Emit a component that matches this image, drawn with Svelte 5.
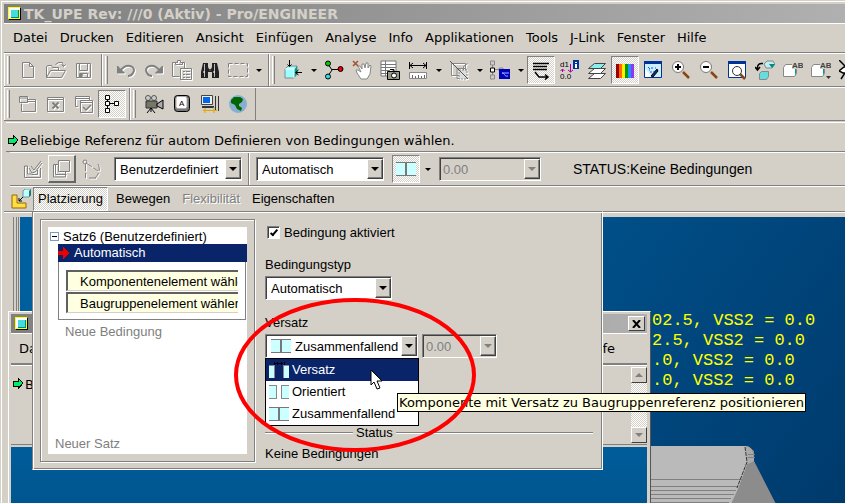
<script lang="ts">
  type Tool = { icon: string; label: string; off?: boolean; pressed?: boolean; menu?: boolean };

  const menus = ['Datei', 'Drucken', 'Editieren', 'Ansicht', 'Einfügen', 'Analyse', 'Info', 'Applikationen', 'Tools', 'J-Link', 'Fenster', 'Hilfe'];

  const mainBar: Tool[][] = [
    [
      { icon: 'new', label: 'Neu', off: true },
      { icon: 'open', label: 'Öffnen', off: true },
      { icon: 'save', label: 'Speichern', off: true }
    ],
    [
      { icon: 'undo', label: 'Rückgängig', off: true },
      { icon: 'redo', label: 'Wiederholen', off: true },
      { icon: 'paste', label: 'Einfügen', off: true },
      { icon: 'find', label: 'Suchen' },
      { icon: 'marquee', label: 'Auswahl', off: true, menu: true }
    ],
    [
      { icon: 'place', label: 'Komponente', menu: true },
      { icon: 'nodes', label: 'Verbindung' },
      { icon: 'hand', label: 'Ziehen' },
      { icon: 'snapshot', label: 'Schnappschuss' },
      { icon: 'measure', label: 'Messen', menu: true },
      { icon: 'section', label: 'Schnitt', off: true, menu: true },
      { icon: 'structure', label: 'Struktur', menu: true },
      { icon: 'textflow', label: 'Notizen', pressed: true },
      { icon: 'dims', label: 'Bemaßung' },
      { icon: 'layers', label: 'Folien' },
      { icon: 'colors', label: 'Farben', pressed: true },
      { icon: 'repaint', label: 'Bildaufbau' },
      { icon: 'zoomin', label: 'Vergrößern' },
      { icon: 'zoomout', label: 'Verkleinern' },
      { icon: 'zoomfit', label: 'Einpassen' },
      { icon: 'orient', label: 'Orientieren' },
      { icon: 'views', label: 'Ansichten' },
      { icon: 'viewsmenu', label: 'Ansichtsliste' },
      { icon: 'spin', label: 'Drehzentrum' }
    ]
  ];

  const secondBar: Tool[][] = [
    [
      { icon: 'newwin', label: 'Neues Fenster', off: true },
      { icon: 'closewin', label: 'Fenster schließen', off: true },
      { icon: 'checkwin', label: 'Fenster aktivieren', off: true },
      { icon: 'tree', label: 'Modellbaum', pressed: true }
    ],
    [
      { icon: 'camera', label: 'Kamera' },
      { icon: 'key', label: 'Tastenkürzel' },
      { icon: 'computer', label: 'Arbeitsplatz' },
      { icon: 'globe', label: 'Browser' }
    ]
  ];

  const tabs = [
    { name: 'Platzierung', active: true },
    { name: 'Bewegen' },
    { name: 'Flexibilität', off: true },
    { name: 'Eigenschaften' }
  ];

  const offsets = [
    { name: 'Versatz', icon: 'gapwide' },
    { name: 'Orientiert', icon: 'gap' },
    { name: 'Zusammenfallend', icon: 'mate' }
  ];

  const notes = ['02.5, VSS2 = 0.0', '2.5, VSS2 = 0.0', '.0, VSS2 = 0.0', '.0, VSS2 = 0.0'];

  let enabled = $state(true);
  let hovered = $state('Versatz');
</script>

{#snippet appIcon()}
  <svg class="px" width="14" height="14" viewBox="0 0 14 14" aria-hidden="true">
    <path d="M1 1h12v12H1z" fill="#000" />
    <path d="M0 0h12v12H0z" fill="#ff0" />
    <path d="M1 1h11v2H1zM1 1h2v10H1z" fill="#fff" />
    <path d="M0 .5h12M.5 0v12M0 11.500h12" stroke="#ff0" stroke-dasharray="1 1" />
    <path d="M3 3h8v8H3z" fill="#088" />
    <path d="M3 3h7v7H3z" fill="#4dd" />
  </svg>
{/snippet}

{#snippet goArrow()}
  <svg class="px" width="12" height="13" viewBox="0 0 12 13" aria-hidden="true">
    <path d="M1 4h5V1l5 5-5 6V9H1z" fill="#0e6" stroke="#000" />
  </svg>
{/snippet}

{#snippet plates(kind: string)}
  <svg class="px" width="22" height="16" viewBox="0 0 22 16" aria-hidden="true">
    {#if kind === 'mate'}
      <path d="M1 2h20v12H1z" fill="#cff" />
      <path d="M1 1h20v1H1zM1 14h20v1H1zM10 1h2v14h-2z" fill="#777" />
    {:else if kind === 'gap'}
      <path d="M1 2h8v12H1zM13 2h8v12h-8z" fill="#cff" />
      <path d="M1 1h8v1H1zM1 14h8v1H1zM8 1h1v14H8zM13 1h8v1h-8zM13 14h8v1h-8zM13 1h1v14h-1z" fill="#888" />
    {:else}
      <path d="M1 4h6v12H1zM15 4h6v12h-6z" fill="#cff" />
      <path d="M1 3h6v1H1zM6 3h1v13H6zM15 3h6v1h-6zM15 3h1v13h-1z" fill="#888" />
      <path d="M6 0v3M16 0v3M7 1h8M9 0v3M13 0v3" stroke="#000" />
    {/if}
  </svg>
{/snippet}

{#snippet icon(name: string)}
  <svg width="20" height="20" viewBox="0 0 20 20" fill="none" stroke="#000" aria-hidden="true">
    {#if name === 'new'}
      <path d="M4.500 2.500h7l4 4v11h-11zM11.500 2.500v4h4" />
    {:else if name === 'open'}
      <path d="M.5 17.500v-11l1-1h4l1 2h6v3M.5 17.500l4-7h15l-4 7zM9.500 4.500l3-2h4l1 4M15.500 4.500l2 2 2-2" />
    {:else if name === 'save'}
      <path d="M2.500 3.500h14v14h-14zM5.500 3.500v7h8v-7M5.500 17.500v-4h8v4M7.500 15h2" />
      <path d="M6 14h2v3H6z" fill="#808080" />
    {:else if name === 'undo'}
      <path d="M4 11c3-4 6-6 10-5 4 1 5 4 3 7-1 2-3 3-5 3" stroke-width="2" />
      <path d="M1.500 6v7h7z" fill="#808080" />
    {:else if name === 'redo'}
      <path d="M16 11c-3-4-6-6-10-5-4 1-5 4-3 7 1 2 3 3 5 3" stroke-width="2" />
      <path d="M18.500 6v7h-7z" fill="#808080" />
    {:else if name === 'paste'}
      <path d="M5.500 2.500h-5v14h7M12.500 8v-5.500h-3M3.500 4.500h7v-2h-2v-2h-3v2h-2zM8.500 8.500h11v11h-11zM11 11.500h2M14 11.500h4M11 14.500h2M14 14.500h4M11 17.500h2M14 17.500h4" />
    {:else if name === 'find'}
      <path d="M3 3h5v4l1 2h2l1-2V3h5l2 9v6h-7v-6H8v6H1v-6z" fill="#222" stroke="none" />
      <path d="M4.500 4v13M14.500 4v13M9.500 10h1" stroke="#bbb" />
      <path d="M3 12h2M13 12h2" stroke="#fff" />
    {:else if name === 'marquee'}
      <path d="M.5 3.500h19v13H.5z" stroke-dasharray="4 2" />
    {:else if name === 'place'}
      <path d="M2 9l3-3h9v8l-3 4H2z" fill="#9ff" stroke="#888" />
      <path d="M11 10l3-4v8l-3 4z" fill="#099" stroke="none" />
      <path d="M2 9h9v9" stroke="#fff" />
      <path d="M6.500 0v6M4.500 4.500l2 2 2-2M19 12.500h-6M15.500 10l-3 2.500 3 2.500" />
    {:else if name === 'nodes'}
      <path d="M4 4l4 6-4 6M8 9.500h9" />
      <circle cx="4" cy="3.500" r="2.500" fill="#0c0" />
      <circle cx="16.500" cy="9" r="2.500" fill="#e00" />
      <circle cx="4" cy="16.500" r="2.500" fill="#3dd" />
    {:else if name === 'hand'}
      <path d="M1 1l5 5M6 1L1 6" stroke="#a0522d" stroke-width="1.500" />
      <path d="M9 19l-4-6-1-3h2l3 2-3-6h2l2 3V4h2l1 4 1-5h2l0 5 2-3 1 1-1 8-3 5z" fill="#fff" stroke="#888" />
    {:else if name === 'snapshot'}
      <path d="M1 1h15v15H1z" fill="#fff" stroke="#777" />
      <path d="M1 4.500h15M1 7.500h15M1 10.500h9M1 13.500h8M5.500 1v15" stroke="#777" />
      <path d="M7.500 11.500h12v8h-12zM10 9.500h4v2" fill="#998" />
      <circle cx="14" cy="15.500" r="2.500" fill="#fff" />
    {:else if name === 'measure'}
      <path d="M1.500 2v7M18.500 2v7M2 5.500h16M5 3L2 5.500 5 8M15 3l3 2.500L15 8" />
      <path d="M1.500 12.500h17v6h-17z" fill="#fff" stroke="#888" />
      <path d="M4.500 15v3M7.500 16v2M10.500 15v3M13.500 16v2M16.500 15v3" stroke="#666" />
    {:else if name === 'section'}
      <path d="M2.500 3.500h14v10M2.500 3.500v12h5M7.500 15.500h7v-9l4-3M8 8.500h9v10H8z" stroke="#888" />
      <path d="M10 10h8v9h-8z" fill="#ddd" stroke="#888" stroke-dasharray="2 1" />
      <path d="M1 1l18 18" stroke="#555" />
    {:else if name === 'structure'}
      <path d="M2.500 4v12M5 9.500h7" stroke="#888" />
      <path d="M.5 1h4v4h-4zM.5 15h4v4h-4zM9 8h4v3H9z" fill="#ccc" stroke="#888" />
      <path d="M.5 8h4v4h-4z" fill="#fff" />
      <path d="M9 9h11v10H9z" fill="#00b" stroke="none" />
      <path d="M12 13h7M12 13c3 0 2 4 6 3" stroke="#9bf" />
    {:else if name === 'textflow'}
      <path d="M2 3.500h16M2 6.500h14M2 9.500h14M4 12l4 5h9M14 14.500l3 2.500-3 2.500" stroke-width="1.500" />
    {:else if name === 'dims'}
      <text x="1" y="7" class="tiny">d1</text>
      <text x="1" y="19" class="tiny">0.0</text>
      <path d="M3.500 12V9M1.500 11l2-2 2 2M11.500 4v8M9 10l2.500 2 2.500-2" stroke="#a0a" />
      <path d="M14 0h6v9h-6z" fill="#039" stroke="none" />
      <path d="M17 2v1M17 4v4" stroke="#fff" stroke-width="2" />
    {:else if name === 'layers'}
      <path d="M1.500 18.500l6-5h11l-5 5z" fill="#fff" stroke="#444" />
      <path d="M1.500 13.500l6-5h11l-5 5z" fill="#fff" stroke="#444" />
      <path d="M1.500 8.500l6-5h11l-5 5z" fill="#8ee" stroke="#444" />
    {:else if name === 'colors'}
      <g stroke="none">
        <path d="M1 4h3v14H1z" fill="#900" />
        <path d="M4 4h3v14H4z" fill="#f60" />
        <path d="M7 4h3v14H7z" fill="#fe0" />
        <path d="M10 4h3v14h-3z" fill="#090" />
        <path d="M13 4h3v14h-3z" fill="#19f" />
        <path d="M16 4h3v14h-3z" fill="#93e" />
      </g>
    {:else if name === 'repaint'}
      <path d="M1.500 1.500h17v16h-17z" fill="#fff" stroke="#039" />
      <path d="M1 1h18v3H1z" fill="#039" stroke="none" />
      <path d="M2 4h16v13h-8l-8-8z" fill="#cef" stroke="none" />
      <path d="M5 7l2 2M9 7v2M7 12h2M11 11v1M6 10h1M12 8h1" stroke="#06f" />
      <path d="M14 9l1 2-5 6-2-1z" fill="#137" />
    {:else if name === 'zoomin' || name === 'zoomout'}
      <path d="M12 12l6 6" stroke="#8b4513" stroke-width="2.500" />
      <circle cx="7" cy="7" r="5.500" fill="#fff" stroke="#777" />
      <path d="M4 7h6" stroke-width="2" />
      {#if name === 'zoomin'}
        <path d="M7 4v6" stroke-width="2" />
      {/if}
    {:else if name === 'zoomfit'}
      <path d="M1.500 1.500h17v16h-17z" fill="#fff" stroke="#039" />
      <path d="M1 1h18v3H1z" fill="#039" stroke="none" />
      <path d="M13 14l5 5" stroke="#8b4513" stroke-width="2.500" />
      <circle cx="10" cy="11" r="4.500" fill="#fff" stroke="#333" />
    {:else if name === 'orient'}
      <path d="M8 3.500C4 3 2 5 2.500 9M0 7l2.500 3L5 7" stroke-width="1.500" />
      <path d="M4.500 13.500l2-2h7v5l-2 3h-7z" fill="#6dd" stroke="#888" />
      <path d="M9 4l3-3h6l2 3-3 4h-6z" fill="#bee" stroke="#888" />
      <path d="M14 4l6 0-3 4z" fill="#088" stroke="none" />
    {:else if name === 'views' || name === 'viewsmenu'}
      <path d="M.5 7.500l2-3h11v9l-2 3H.5z" fill="#fff" stroke="#888" />
      <path d="M12 8l1-3v8l-1 3z" fill="#099" stroke="none" />
      <path d="M9 0h11v9H9z" fill="#d4d0c8" stroke="none" />
      <text x="9" y="8" class="tiny dark">AB</text>
      {#if name === 'viewsmenu'}
        <path d="M15 16h5l-2.500 3z" fill="#333" stroke="none" />
      {/if}
    {:else if name === 'spin'}
      <path d="M0 0l6 6M2 19l4-6M0 11l5-4h4v6H4z" fill="#fff" stroke-width="1.500" />
    {:else if name === 'newwin'}
      <path d="M10 5.500h7.500v12h-14v-8" />
      <path d="M1.500 2.500h8v6h-8zM1 4h9M10 7.500h7" />
    {:else if name === 'closewin'}
      <path d="M1.500 3.500h16v14h-16zM2 5.500h15" />
      <path d="M6.500 8.500l6 6M12.500 8.500l-6 6" stroke-width="2" />
    {:else if name === 'checkwin'}
      <path d="M4 12.500H1.500v-10h14V6M2 4.500h13M6.500 6.500h12v12h-12zM7 8.500h11" />
      <path d="M9 13l3 3 5-5" stroke-width="1.500" />
    {:else if name === 'tree'}
      <path d="M5.500 5v10M8 9.500h8" />
      <path d="M3.500 1.500h4v4h-4zM3.500 7.500h4v4h-4zM3.500 14.500h4v4h-4zM12.500 7.500h4v4h-4z" fill="#fff" />
    {:else if name === 'camera'}
      <circle cx="4" cy="4" r="2.500" fill="#ccc" stroke="#555" />
      <circle cx="10" cy="4" r="2.500" fill="#ccc" stroke="#555" />
      <path d="M2 7h11v7H2z" fill="#776" stroke="#333" />
      <path d="M13 10l6-4v9l-6-3z" fill="#aaa" />
      <path d="M7 14l-4 5M7 14l4 5M7 14v4" />
    {:else if name === 'key'}
      <rect x="2.500" y="1.500" width="15" height="16" rx="3" fill="#777" />
      <rect x="4" y="2.500" width="11" height="12" rx="2" fill="#fff" stroke="#aaa" />
      <text x="7" y="12" class="tiny">A</text>
    {:else if name === 'computer'}
      <path d="M1.500 1.500h11v9h-11z" fill="#eee" stroke="#444" />
      <path d="M3 3h7v6H3z" fill="#06e" stroke="none" />
      <path d="M2 13h12" stroke="#333" stroke-width="2" />
      <path d="M15.500 2v15M18.500 2v15" stroke="#333" />
      <path d="M3 16.500h14M5 19v-5M14 13v6" stroke="#da0" />
    {:else if name === 'globe'}
      <circle cx="10" cy="10" r="9" fill="#88aed0" stroke="none" />
      <path d="M3 6l3-3 6 0 3 2-1 3-3 2 0 2 3 2-1 3-4-2-2-4-4-2z" fill="#060" stroke="none" />
    {:else if name === 'edit'}
      <path d="M1.500 7v11.500h16V9M4.500 7v8h4M1.500 7h3M8.500 15.500h6V11" />
      <path d="M6 9l3 5 3-1 7-9M8 7l3 4 7-9" />
    {:else if name === 'copy'}
      <path d="M6.500 1.500h11v11h-11zM3.500 5.500v10h11M1.500 5.500v12.500h12v-5M1.500 5.500h5" />
    {:else if name === 'angle'}
      <path d="M4.500 5v14M5 4l12 8M17 5c2 4 2 9-3 14M15 19h-8" stroke-dasharray="7 2" />
      <circle cx="4" cy="3" r="2" />
    {/if}
  </svg>
{/snippet}

{#snippet toolbar(groups: Tool[][])}
  <div class="toolbar" role="toolbar">
    {#each groups as group}
      <div class="group">
        {#each group as tool}
          <button class="tool" class:off={tool.off} class:pressed={tool.pressed} aria-label={tool.label}>
            {@render icon(tool.icon)}
          </button>
          {#if tool.menu}
            <button class="more" aria-label={tool.label + ' Liste'}><i class="tri"></i></button>
          {/if}
        {/each}
      </div>
    {/each}
  </div>
{/snippet}

<div class="app">
  <header class="title">
    {@render appIcon()}
    <span>TK_UPE Rev: ///0 (Aktiv) - Pro/ENGINEER</span>
  </header>

  <nav class="menu">
    {#each menus as item}
      <button>{item}</button>
    {/each}
  </nav>

  {@render toolbar(mainBar)}
  {@render toolbar(secondBar)}

  <div class="message">
    {@render goArrow()}
    <span>Beliebige Referenz für autom Definieren von Bedingungen wählen.</span>
  </div>

  <div class="dashboard">
    <div class="tools">
      <button class="tool off" aria-label="Bearbeiten">{@render icon('edit')}</button>
      <button class="tool off raised" aria-label="Kopieren">{@render icon('copy')}</button>
      <button class="tool off" aria-label="Winkel">{@render icon('angle')}</button>
    </div>
    <div class="combo set">
      <select aria-label="Satztyp"><option>Benutzerdefiniert</option></select>
      <i class="drop"></i>
    </div>
    <div class="divider"></div>
    <div class="combo kind">
      <select aria-label="Bedingung"><option>Automatisch</option></select>
      <i class="drop"></i>
    </div>
    <div class="tools">
      <button class="tool pressed" aria-label="Zusammenfallend">{@render plates('mate')}</button>
      <button class="more" aria-label="Versatz Liste"><i class="tri"></i></button>
    </div>
    <div class="combo value">
      <select disabled aria-label="Wert"><option>0.00</option></select>
      <i class="drop"></i>
    </div>
    <span class="state">STATUS:Keine Bedingungen</span>
  </div>

  <div class="tabs">
    <svg class="partmark" width="20" height="20" viewBox="0 0 20 20" aria-hidden="true">
      <path d="M1 6h5v8h9v5H1z" fill="#fd4" stroke="#960" />
      <path d="M12 2l2-2h6v6l-2 2h-6z" fill="#bff" stroke="#699" />
      <path d="M18 2l2-2v6l-2 2z" fill="#277" />
      <path d="M12 8l-4 4M8 9v3h3" fill="none" stroke="#000" />
    </svg>
    {#each tabs as tab}
      <button class="tab" class:active={tab.active} disabled={tab.off}>{tab.name}</button>
    {/each}
  </div>

  <main class="workspace">
    <div class="viewport"></div>

    <div class="notes">
      {#each notes as note}
        <div>{note}</div>
      {/each}
    </div>

    <svg class="model" width="130" height="60" viewBox="0 0 130 60" aria-hidden="true">
      <path d="M0 0h97l6 5v10l23 45H0z" fill="#8c8c8c" />
      <path d="M0 0h95l2 16-10 27-8 17H0z" fill="#bababa" />
      <path d="M95 1c5-1 8 4 8 14l-6 3z" fill="#aaa" />
      <path d="M0 33.500h91M0 40.500h87M0 44.500h85M0 48.500h83M0 52.500h80M0 56.500h78M97 8.500h7M97 11.500h7" stroke="#808080" />
      <path d="M94 1l2 15-10 26" fill="none" stroke="#333" stroke-dasharray="4 1" />
    </svg>

    <section class="child">
      <header class="title">
        {@render appIcon()}
        <span>I</span>
        <button class="close" aria-label="Schließen">
          <svg width="9" height="8" viewBox="0 0 9 8"><path d="M1 0l7 8M8 0L1 8" stroke="#000" stroke-width="2" /></svg>
        </button>
      </header>
      <div class="childmenu">
        <button>Datei</button>
        <button>Hilfe</button>
      </div>
      <div class="childbody">
        <div class="childmsg">{@render goArrow()}<span>B</span></div>
        <div class="scroll">
          <button aria-label="Nach oben"><i class="tri up"></i></button>
          <button aria-label="Nach unten"><i class="tri"></i></button>
        </div>
      </div>
      <div class="childview"></div>
    </section>

    <section class="panel">
      <div class="sets">
        <div class="tree">
          <div class="node"><i class="minus"></i>Satz6 (Benutzerdefiniert)</div>
          <div class="branch">
            <div class="current">
              <svg class="px" width="12" height="12" viewBox="0 0 12 12" aria-hidden="true">
                <path d="M0 4h5V0l6 6-6 6V8H0z" fill="#e00" />
              </svg>
              Automatisch
            </div>
            <div class="refs">
              <input readonly aria-label="Komponentenreferenz" value="Komponentenelement wählen" />
              <input readonly aria-label="Baugruppenreferenz" value="Baugruppenelement wählen" />
            </div>
            <button class="add">Neue Bedingung</button>
          </div>
          <button class="add last">Neuer Satz</button>
        </div>
      </div>

      <div class="form">
        <label class="check">
          <input type="checkbox" bind:checked={enabled} />
          Bedingung aktiviert
        </label>
        <label class="caption" for="ctype">Bedingungstyp</label>
        <div class="combo type">
          <select id="ctype"><option>Automatisch</option></select>
          <i class="drop"></i>
        </div>
        <label class="caption" for="coffset">Versatz</label>
        <div class="pair">
          <div class="combo offset">
            <select id="coffset"><option>Zusammenfallend</option></select>
            <span class="mark">{@render plates('mate')}</span>
            <i class="drop"></i>
          </div>
          <div class="combo amount">
            <select disabled aria-label="Versatzwert"><option>0.00</option></select>
            <i class="drop"></i>
          </div>
          <div class="list" role="listbox" aria-label="Versatz">
            {#each offsets as item}
              <button
                role="option"
                aria-selected={hovered === item.name}
                class:hot={hovered === item.name}
                onmouseenter={() => (hovered = item.name)}
              >
                {@render plates(item.icon)}{item.name}
              </button>
            {/each}
          </div>
        </div>
        <div class="rule"><span>Status</span></div>
        <p>Keine Bedingungen</p>
      </div>
    </section>

    <div class="tip" role="tooltip">Komponente mit Versatz zu Baugruppenreferenz positionieren</div>

    <svg class="ring" width="244" height="156" viewBox="0 0 244 156" aria-hidden="true">
      <ellipse cx="122" cy="78" rx="119" ry="75" fill="none" stroke="#f00" stroke-width="4" />
    </svg>
    <svg class="cursor" width="13" height="21" viewBox="0 0 13 21" aria-hidden="true">
      <path d="M1 1v15l3-3 3 7 3-1-3-7h5z" fill="#fff" stroke="#000" />
    </svg>
  </main>
</div>

<style>
  :global(body) {
    background: #d4d0c8;
    overflow: hidden;
  }

  .app {
    --face: #d4d0c8;
    --dark: #808080;
    --navy: #0a246a;
    --checker: repeating-conic-gradient(#fff 0 25%, #d4d0c8 0 50%) 0 0 / 2px 2px;
    box-sizing: border-box;
    display: flex;
    flex-direction: column;
    height: 100vh;
    padding: 4px 0 0 4px;
    overflow: hidden;
    background: var(--face);
    box-shadow: inset 1px 1px #d4d0c8, inset 2px 2px #fff;
    font: 13px/16px 'Liberation Sans', Arial, sans-serif;
    color: #000;
  }

  .app *,
  .app *::before {
    box-sizing: border-box;
  }

  svg {
    display: block;
    flex: none;
  }

  .px {
    shape-rendering: crispEdges;
  }

  button {
    padding: 0;
    border: 0;
    background: none;
    color: inherit;
    font: inherit;
    white-space: nowrap;
  }

  .tiny {
    font: 8px 'Liberation Sans', sans-serif;
    fill: #000;
    stroke: none;
  }

  .tiny.dark {
    font-weight: bold;
    fill: #444;
  }

  .title {
    flex: none;
    display: flex;
    align-items: center;
    gap: 2px;
    height: 19px;
    padding-left: 4px;
    background: linear-gradient(90deg, #808080, #b0b0b0);
    color: #d4d0c8;
    font: bold 14px/18px 'DejaVu Sans', Verdana, sans-serif;
    white-space: nowrap;
  }

  .menu {
    flex: none;
    display: flex;
    gap: 12px;
    height: 30px;
    padding-left: 9px;
    border-top: 1px solid #fff;
    border-bottom: 1px solid var(--dark);
    font: 13px/28px 'DejaVu Sans', Verdana, sans-serif;
  }

  .toolbar {
    flex: none;
    display: flex;
    height: 34px;
    border-top: 1px solid #fff;
    border-bottom: 1px solid var(--dark);
  }

  .group {
    flex: none;
    display: flex;
    align-items: center;
    padding: 0 3px 0 2px;
    border-right: 1px solid var(--dark);
    border-left: 1px solid #fff;
  }

  .group::before {
    content: '';
    width: 3px;
    height: 28px;
    margin-right: 4px;
    border-left: 1px solid #fff;
    border-right: 1px solid var(--dark);
  }

  .tool {
    flex: none;
    display: grid;
    place-items: center;
    width: 28px;
    height: 28px;
    border: 1px solid transparent;
  }

  .tool.off svg {
    stroke: #808080;
    filter: drop-shadow(1px 1px 0 #fff);
  }

  .tool.pressed {
    border-color: var(--dark) #fff #fff var(--dark);
    background: var(--checker);
  }

  .tool.raised {
    border: 1px solid #fff;
    border-right: 2px solid #666;
    border-bottom: 2px solid #666;
  }

  .more {
    display: grid;
    place-items: center;
    width: 13px;
    height: 28px;
  }

  .tri {
    border: 3px solid transparent;
    border-top-color: #000;
    border-bottom: 0;
  }

  .message {
    flex: none;
    display: flex;
    align-items: center;
    gap: 1px;
    height: 30px;
    margin: 1px 0 0 2px;
    padding: 7px 0 0 1px;
    border-top: 1px solid #fff;
    border-bottom: 1px solid var(--dark);
    font: 13px/16px 'DejaVu Sans', Verdana, sans-serif;
    white-space: nowrap;
  }

  .dashboard {
    flex: none;
    display: flex;
    align-items: center;
    height: 34px;
    margin-left: 6px;
    padding-left: 9px;
    border-top: 1px solid #fff;
    border-bottom: 1px solid var(--dark);
    white-space: nowrap;
  }

  .state {
    font-size: 14px;
  }

  .tools {
    display: flex;
  }

  .tools .tool {
    margin-right: 1px;
  }

  .divider {
    width: 2px;
    height: 32px;
    margin: 0 6px;
    border-left: 1px solid var(--dark);
    border-right: 1px solid #fff;
  }

  .combo {
    flex: none;
    display: grid;
    align-items: center;
    height: 24px;
    border: 1px solid;
    border-color: var(--dark) #fff #fff var(--dark);
  }

  .combo > * {
    grid-area: 1 / 1;
  }

  .combo select {
    appearance: none;
    width: 100%;
    height: 22px;
    margin: 0;
    padding: 0 16px 0 4px;
    border: 1px solid #404040;
    border-right: 0;
    border-bottom: 0;
    border-radius: 0;
    background: #fff;
    color: #000;
    font: inherit;
  }

  .combo select:disabled {
    background: var(--face);
    color: var(--dark);
    opacity: 1;
  }

  .drop {
    justify-self: end;
    display: grid;
    place-items: center;
    width: 16px;
    height: 20px;
    border: 1px solid;
    border-color: #fff #404040 #404040 #fff;
    box-shadow: inset -1px -1px var(--dark);
    background: var(--face);
    pointer-events: none;
  }

  .drop::before {
    content: '';
    border: 4px solid transparent;
    border-top-color: #000;
    border-bottom: 0;
  }

  select:disabled ~ .drop::before {
    border-top-color: var(--dark);
  }

  .set {
    width: 128px;
    margin-left: 8px;
  }

  .kind {
    width: 128px;
    margin-right: 8px;
  }

  .value {
    width: 102px;
    margin: 0 32px 0 5px;
  }

  .value select,
  .amount select {
    padding-left: 2px;
  }

  .tabs {
    flex: none;
    display: flex;
    gap: 4px;
    height: 25px;
    margin-left: 6px;
    border-top: 1px solid #fff;
  }

  .partmark {
    margin: 2px -2px 0 1px;
  }

  .tab {
    height: 24px;
    padding: 0 4px;
  }

  .tab.active {
    border: 1px solid;
    border-color: var(--dark) #fff #fff var(--dark);
    background: var(--checker);
  }

  .tab:disabled {
    color: var(--dark);
    text-shadow: 1px 1px #fff;
  }

  .workspace {
    position: relative;
    flex: 1;
    display: flex;
    padding-top: 5px;
    padding-left: 9px;
    border-top: 1px solid var(--dark);
    box-shadow: inset 0 1px #fff;
  }

  .workspace::before {
    content: '';
    width: 6px;
    margin-right: 1px;
    border-left: 1px solid var(--dark);
    border-right: 3px double var(--dark);
  }

  .viewport {
    flex: 1;
    background: linear-gradient(125deg, #00609f 0%, #005590 45%, #003a6c 100%);
  }

  .notes {
    position: absolute;
    left: 648px;
    top: 99px;
    color: #ff0;
    font: 17px/20px 'Liberation Mono', monospace;
    white-space: pre;
  }

  .model {
    position: absolute;
    left: 647px;
    top: 234px;
  }

  .child {
    position: absolute;
    left: 4px;
    top: 99px;
    bottom: 0;
    display: flex;
    flex-direction: column;
    width: 643px;
    padding: 2px 3px 0 2px;
    border-top: 1px solid #fff;
    border-left: 1px solid #fff;
    border-right: 1px solid #555;
    background: var(--face);
  }

  .child .title {
    padding: 0 2px 0 4px;
  }

  .close {
    display: grid;
    place-items: center;
    width: 17px;
    height: 15px;
    margin-left: auto;
    border: 1px solid;
    border-color: #fff #404040 #404040 #fff;
    background: var(--face);
  }

  .childmenu {
    display: flex;
    justify-content: space-between;
    height: 32px;
    padding: 0 32px 0 8px;
    border-top: 1px solid #fff;
    border-bottom: 2px solid var(--dark);
    font: 13px/28px 'DejaVu Sans', Verdana, sans-serif;
  }

  .childbody {
    display: flex;
    justify-content: space-between;
    height: 80px;
    border-top: 1px solid #fff;
    border-bottom: 1px solid var(--dark);
    font: 13px/16px 'DejaVu Sans', Verdana, sans-serif;
  }

  .childmsg {
    display: flex;
    gap: 1px;
    padding: 11px 0 0 1px;
  }

  .scroll {
    display: flex;
    flex-direction: column;
    justify-content: space-between;
    width: 16px;
    margin: 1px 0;
    background: var(--checker);
  }

  .scroll button {
    display: grid;
    place-items: center;
    height: 16px;
    border: 1px solid;
    border-color: #fff #404040 #404040 #fff;
    background: var(--face);
  }

  .scroll .tri {
    border-width: 4px;
    border-top-color: var(--dark);
    border-bottom-width: 0;
  }

  .scroll .tri.up {
    border-top-width: 0;
    border-bottom: 4px solid var(--dark);
  }

  .childview {
    flex: 1;
    margin-top: 2px;
    background: linear-gradient(#005c9a, #00568f);
  }

  .panel {
    position: absolute;
    left: 28px;
    top: -1px;
    display: flex;
    gap: 9px;
    width: 571px;
    height: 259px;
    padding: 7px 9px 7px 7px;
    border: 1px solid var(--dark);
    border-right-color: #fff;
    border-bottom-color: #fff;
    box-shadow: inset 1px 1px #fff, inset -1px -1px var(--dark);
    background: var(--face);
  }

  .sets {
    flex: none;
    display: flex;
    width: 215px;
    padding: 7px;
    border: 1px solid var(--dark);
    box-shadow: inset 1px 1px #fff, 1px 1px #fff;
  }

  .tree {
    flex: 1;
    display: flex;
    flex-direction: column;
    min-width: 0;
    background: #fff;
  }

  .node {
    display: flex;
    align-items: center;
    gap: 4px;
    height: 17px;
    padding: 2px 0 0 2px;
    white-space: nowrap;
  }

  .minus {
    display: grid;
    place-items: center;
    width: 9px;
    height: 9px;
    border: 1px solid #7b9ebd;
    background: #fff;
  }

  .minus::before {
    content: '';
    width: 5px;
    height: 1px;
    background: #000;
  }

  .branch {
    margin-left: 10px;
  }

  .current {
    display: flex;
    align-items: center;
    gap: 4px;
    height: 18px;
    background: var(--navy);
    color: #fff;
  }

  .refs {
    height: 58px;
    margin-right: 1px;
    padding: 8px 7px;
    border: 1px solid var(--dark);
    border-top: 0;
  }

  .refs input {
    display: block;
    width: 100%;
    height: 21px;
    margin: 0 0 1px;
    padding: 1px 0 0 12px;
    border: 1px solid #d4d0c8;
    border-top: 2px solid #606060;
    border-left: 2px solid #606060;
    border-right: 0;
    border-radius: 0;
    background: #ffffe1;
    font: inherit;
  }

  .add {
    display: block;
    margin: 4px 0 0 7px;
    color: var(--dark);
    text-align: left;
  }

  .add.last {
    margin-top: auto;
    margin-bottom: 2px;
  }

  .form {
    flex: 1;
    display: flex;
    flex-direction: column;
    min-width: 0;
    padding-left: 1px;
  }

  .check {
    display: flex;
    align-items: center;
    gap: 4px;
    height: 20px;
    margin: 4px 0 0 2px;
  }

  .check input {
    appearance: none;
    display: grid;
    place-items: center;
    width: 13px;
    height: 13px;
    margin: 0;
    border: 1px solid;
    border-color: var(--dark) #fff #fff var(--dark);
    box-shadow: inset 1px 1px #404040;
    background: #fff;
  }

  .check input:checked::before {
    content: '';
    width: 4px;
    height: 8px;
    margin-bottom: 2px;
    border: solid #000;
    border-width: 0 2px 2px 0;
    transform: rotate(40deg);
  }

  .caption {
    height: 16px;
    margin: 15px 0 3px;
  }

  .type {
    width: 127px;
  }

  .pair {
    position: relative;
    display: flex;
    gap: 4px;
  }

  .offset {
    width: 153px;
  }

  .offset select {
    padding-left: 28px;
  }

  .mark {
    padding-left: 4px;
    pointer-events: none;
  }

  .amount {
    width: 75px;
  }

  .list {
    position: absolute;
    left: 0;
    top: 24px;
    z-index: 1;
    width: 154px;
    border: 1px solid #000;
    background: #fff;
  }

  .list button {
    display: flex;
    align-items: center;
    gap: 2px;
    width: 100%;
    height: 22px;
    padding-left: 2px;
  }

  .list .hot {
    background: var(--navy);
    color: #fff;
  }

  .rule {
    display: flex;
    align-items: center;
    gap: 3px;
    height: 16px;
    margin-top: 67px;
  }

  .rule::before,
  .rule::after {
    content: '';
    width: 88px;
    border-top: 1px solid var(--dark);
    border-bottom: 1px solid #fff;
  }

  .rule::after {
    flex: 1;
  }

  p {
    margin: 5px 0 0;
  }

  .tip {
    position: absolute;
    left: 393px;
    top: 181px;
    z-index: 2;
    padding: 0 1px;
    border: 1px solid #000;
    background: #ffffe1;
    font: 13px/17px 'DejaVu Sans', Verdana, sans-serif;
    white-space: nowrap;
  }

  .ring {
    position: absolute;
    left: 229px;
    top: 85px;
    z-index: 3;
    pointer-events: none;
  }

  .cursor {
    position: absolute;
    left: 366px;
    top: 157px;
    z-index: 4;
  }
</style>
